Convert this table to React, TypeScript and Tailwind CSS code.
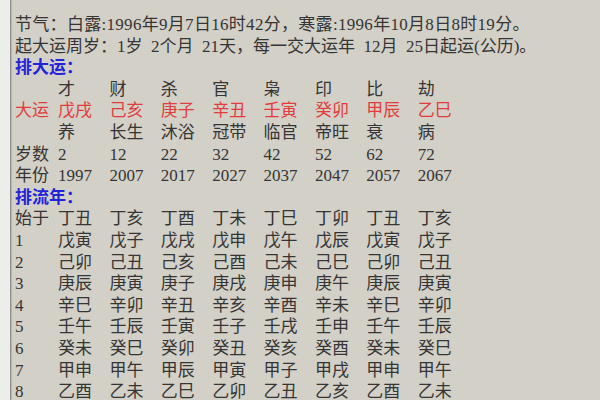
const heads = ["才", "财", "杀", "官", "枭", "印", "比", "劫"];
const dayun = ["戊戌", "己亥", "庚子", "辛丑", "壬寅", "癸卯", "甲辰", "乙巳"];
const stages = ["养", "长生", "沐浴", "冠带", "临官", "帝旺", "衰", "病"];
const ages = ["2", "12", "22", "32", "42", "52", "62", "72"];
const years = ["1997", "2007", "2017", "2027", "2037", "2047", "2057", "2067"];

const liunian: [string, string[]][] = [
  ["始于", ["丁丑", "丁亥", "丁酉", "丁未", "丁巳", "丁卯", "丁丑", "丁亥"]],
  ["1", ["戊寅", "戊子", "戊戌", "戊申", "戊午", "戊辰", "戊寅", "戊子"]],
  ["2", ["己卯", "己丑", "己亥", "己酉", "己未", "己巳", "己卯", "己丑"]],
  ["3", ["庚辰", "庚寅", "庚子", "庚戌", "庚申", "庚午", "庚辰", "庚寅"]],
  ["4", ["辛巳", "辛卯", "辛丑", "辛亥", "辛酉", "辛未", "辛巳", "辛卯"]],
  ["5", ["壬午", "壬辰", "壬寅", "壬子", "壬戌", "壬申", "壬午", "壬辰"]],
  ["6", ["癸未", "癸巳", "癸卯", "癸丑", "癸亥", "癸酉", "癸未", "癸巳"]],
  ["7", ["甲申", "甲午", "甲辰", "甲寅", "甲子", "甲戌", "甲申", "甲午"]],
  ["8", ["乙酉", "乙未", "乙巳", "乙卯", "乙丑", "乙亥", "乙酉", "乙未"]],
];

function Row({ label, cells, red }: { label: string; cells: string[]; red?: boolean }) {
  return (
    <div className="grid grid-cols-[43px_repeat(8,51.4px)]">
      <span className={red ? "text-[#e23c3c]" : ""}>{label}</span>
      {cells.map((c, i) => (
        <span key={i} className={`whitespace-nowrap ${red ? "text-[#e23c3c]" : ""}`}>
          {c}
        </span>
      ))}
    </div>
  );
}

export default function App() {
  return (
    <div className="flex h-[400px] w-[600px] overflow-hidden bg-[#d3d0c7]">
      {/* left frame edge */}
      <div className="w-[10px] shrink-0 bg-[#ededeb]" />
      <div className="w-px shrink-0 bg-[#8f8f8c]" />
      <div className="w-px shrink-0 bg-[#b5b3ad]" />

      <div
        className="flex-1 pl-[3px] pt-[14px] text-[17px] leading-[21.6px] text-[#353535]"
        style={{ fontFamily: '"Liberation Serif", "Noto Sans CJK SC", serif' }}
      >
        <div className="whitespace-nowrap tracking-[0.3px]">
          节气：白露:1996年9月7日16时42分，寒露:1996年10月8日8时19分。
        </div>
        <div className="whitespace-pre">起大运周岁：1岁  2个月  21天，每一交大运年  12月  25日起运(公历)。</div>
        <div className="font-bold text-[#2323d8]">排大运：</div>
        <Row label="" cells={heads} />
        <Row label="大运" cells={dayun} red />
        <Row label="" cells={stages} />
        <Row label="岁数" cells={ages} />
        <Row label="年份" cells={years} />
        <div className="font-bold text-[#2323d8]">排流年：</div>
        {liunian.map(([label, cells]) => (
          <Row key={label} label={label} cells={cells} />
        ))}
      </div>
    </div>
  );
}
